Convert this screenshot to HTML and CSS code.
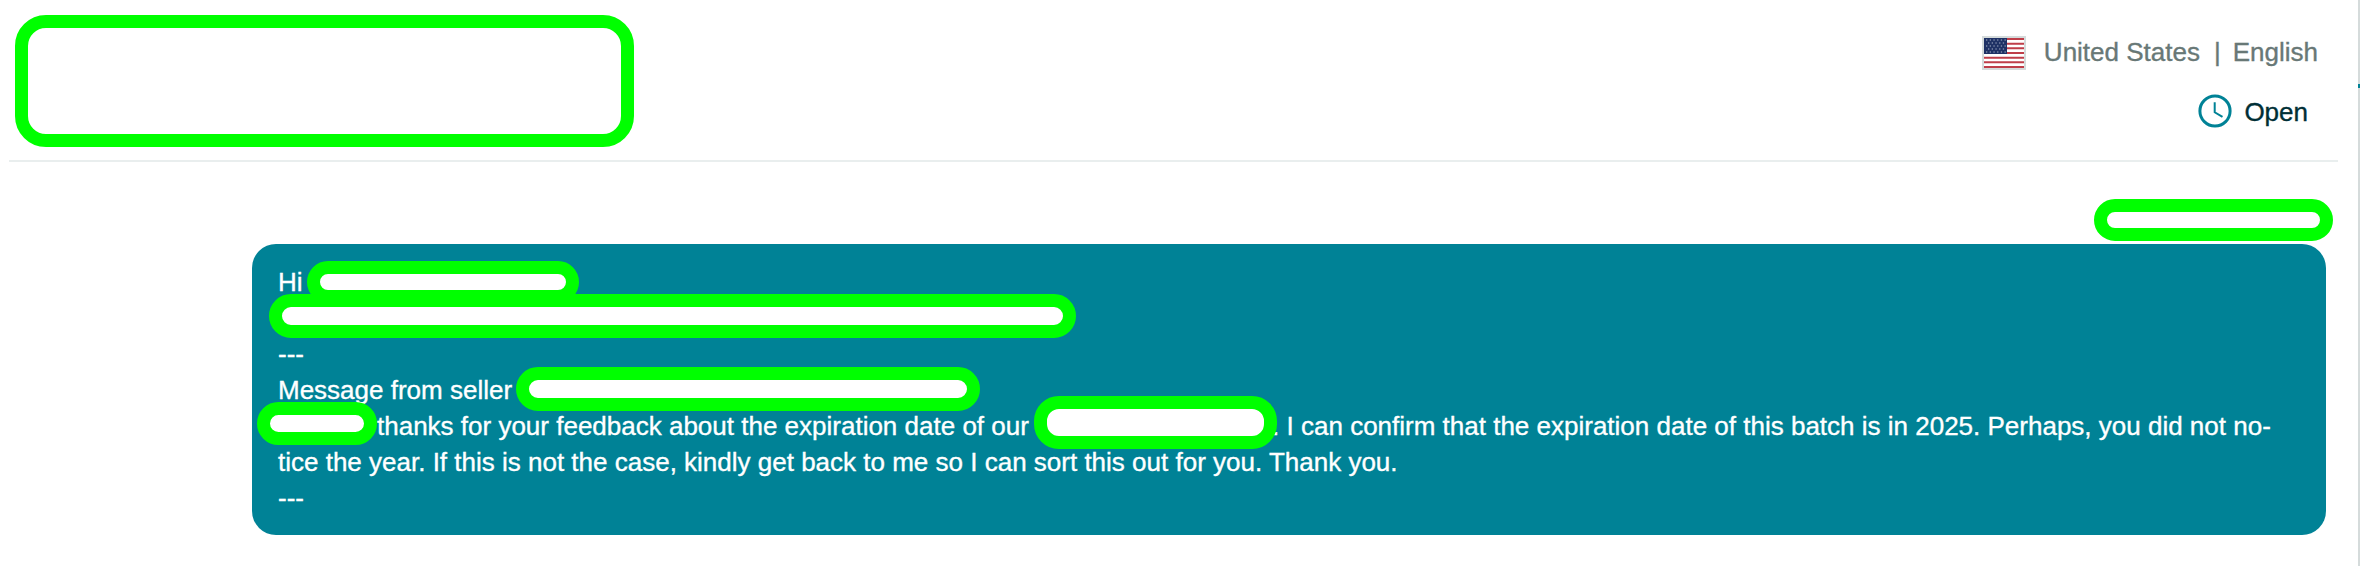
FILE: index.html
```html
<!DOCTYPE html>
<html lang="en">
<head>
    <meta charset="UTF-8">
    <meta name="viewport" content="width=device-width, initial-scale=1.0">
    <title>Messages</title>
    <link rel="stylesheet" href="styles.css">
</head>
<body>
    <div class="page">
        <header class="header">
            <div class="redacted logo"></div>
            <div class="header-info">
                <div class="locale">
                    <svg class="flag" width="44" height="34" viewBox="0 0 44 34">
                        <rect width="44" height="34" fill="#d5dbdb"/>
                        <rect x="2" y="2" width="40" height="30" fill="#fff"/>
                        <path d="M2 3h40M2 7.7h40M2 12.3h40M2 17h40M2 21.7h40M2 26.3h40M2 31h40" stroke="#bf3e49" stroke-width="2.1"/>
                        <rect x="2" y="2" width="23" height="16" fill="#1f3265"/>
                        <path d="M4 4h20M4 10h20M4 16h20" stroke="#a9b3c9" stroke-width="1.2" stroke-dasharray="1.3 2.4"/>
                        <path d="M6 7h17M6 13h17" stroke="#a9b3c9" stroke-width="1.2" stroke-dasharray="1.3 2.4"/>
                    </svg>
                    <span class="country">United States</span>
                    <span class="divider">|</span>
                    <span>English</span>
                </div>
                <div class="status">
                    <svg class="clock" width="34" height="34" viewBox="0 0 34 34" fill="none" stroke="#008296">
                        <circle cx="17" cy="17" r="15.1" stroke-width="3"/>
                        <path d="M16.7 8.3v10l7.8 4.6" stroke-width="2"/>
                    </svg>
                    <span>Open</span>
                </div>
            </div>
        </header>

        <main class="thread">
            <div class="redacted timestamp"></div>
            <div class="bubble">
                <div class="line">Hi <span class="redacted name"></span></div>
                <div class="line"><span class="redacted subject"></span></div>
                <div class="line">---</div>
                <div class="line">Message from seller <span class="redacted seller"></span></div>
                <div class="line"><span class="redacted greeting"></span>thanks for your feedback about the expiration date of our <span class="redacted product"></span>. I can confirm that the expiration date of this batch is in 2025. Perhaps, you did not no-</div>
                <div class="line">tice the year. If this is not the case, kindly get back to me so I can sort this out for you. Thank you.</div>
                <div class="line">---</div>
            </div>
        </main>
    </div>
    <aside class="rail"><div class="rail-marker"></div></aside>
</body>
</html>
```
FILE: styles.css
```css
* {
    box-sizing: border-box;
}
body {
    margin: 0;
    height: 566px;
    display: flex;
    overflow: hidden;
    background-color: #ffffff;
    font-family: "Liberation Sans", Arial, sans-serif;
    font-size: 26px;
    line-height: 36px;
    -webkit-text-stroke: 0.35px;
}
.page {
    flex: 1;
    padding-left: 9px;
}
.header {
    display: flex;
    justify-content: space-between;
    height: 162px;
    margin-right: 20px;
    padding: 15px 0 0 6px;
    border-bottom: 2px solid #e9eeee;
}
.redacted {
    flex: none;
    background-color: #ffffff;
    border: 13px solid #00ff00;
    border-radius: 22px;
}
.logo {
    width: 619px;
    height: 132px;
    border-radius: 31px;
}
.header-info {
    display: flex;
    flex-direction: column;
    align-items: flex-end;
    padding-top: 19px;
}
.locale {
    display: flex;
    margin-right: 20px;
    color: #687876;
}
.flag {
    margin: 2px 18px 0 0;
}
.divider {
    margin: 0 12px 0 14px;
}
.status {
    display: flex;
    margin: 24px 30px 0 0;
    color: #002f36;
}
.clock {
    margin-right: 12px;
}

/* conversation */
.thread {
    display: flex;
    flex-direction: column;
    padding: 37px 32px 0 243px;
}
.timestamp {
    align-self: flex-end;
    width: 239px;
    height: 42px;
    margin: 0 -7px 3px 0;
}
.bubble {
    height: 291px;
    padding: 20px 24px 20px 26px;
    border-radius: 24px;
    background-color: #008296;
    color: #ffffff;
}
.line {
    display: flex;
    height: 36px;
    white-space: pre;
}
.line .redacted {
    z-index: 1;
}
.name {
    width: 272px;
    height: 42px;
    margin: -3px 0 0 -3px;
}
.subject {
    width: 807px;
    height: 44px;
    margin: -6px 0 0 -9px;
}
.seller {
    width: 464px;
    height: 44px;
    margin: -5px 0 0 -3px;
}
.greeting {
    width: 120px;
    height: 43px;
    margin: -6px 0 0 -21px;
}
.product {
    width: 243px;
    height: 53px;
    margin: -12px -5px 0 -2px;
    border-radius: 25px;
}

/* right edge */
.rail {
    width: 2px;
    padding-top: 84px;
    background-color: #d5dbdb;
}
.rail-marker {
    height: 4px;
    background-color: #008296;
}
```
